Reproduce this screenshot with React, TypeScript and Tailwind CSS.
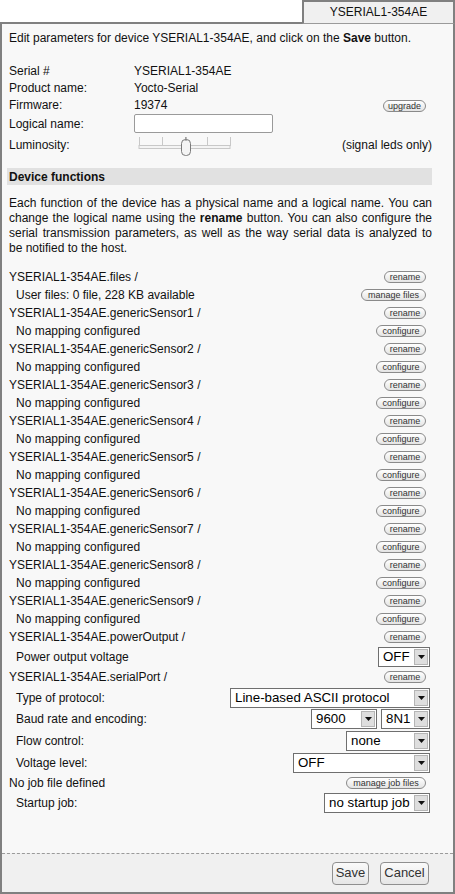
import React from "react";

function Pill({ label, w }: { label: string; w: string }) {
  return (
    <span
      className={`inline-flex h-[12px] items-center justify-center rounded-full border border-[#8a8a8a] bg-linear-to-b from-white to-[#e4e4e4] text-[9px] leading-none text-[#333] ${w}`}
    >
      {label}
    </span>
  );
}

function Select({ value, w }: { value: string; w: string }) {
  return (
    <div
      className={`flex h-[20px] items-center border border-[#6f6f6f] bg-white ${w}`}
    >
      <span className="flex-1 truncate pl-[4px] text-[13.3px] leading-none text-black">
        {value}
      </span>
      <span className="mr-[1px] flex h-[16px] w-[14px] items-center justify-center border border-[#b5b5b5] bg-[#dedede]">
        <svg width="7" height="4" viewBox="0 0 7 4">
          <path d="M0 0h7L3.5 4z" fill="#111" />
        </svg>
      </span>
    </div>
  );
}

function Row({
  children,
  right,
  sub,
  h = "h-[18px]",
  pr = "pr-[6px]",
}: {
  children: React.ReactNode;
  right?: React.ReactNode;
  sub?: boolean;
  h?: string;
  pr?: string;
}) {
  return (
    <div className={`flex items-center justify-between ${h} ${pr}`}>
      <span className={sub ? "pl-[7px]" : ""}>{children}</span>
      {right}
    </div>
  );
}

export default function App() {
  const sensors = [1, 2, 3, 4, 5, 6, 7, 8, 9];

  return (
    <div className="h-[894px] w-[455px] bg-white font-['Liberation_Sans',Arial,sans-serif] text-[12px] text-[#111]">
      {/* tab strip */}
      <div className="flex h-[24px]">
        <div className="flex-1 border-b-2 border-[#808080]" />
        <div className="flex w-[153px] items-center justify-center border-x-2 border-t-2 border-b border-[#808080] border-b-[#9a9a9a] border-b-dashed bg-[#f0f0f0] pb-[1px] text-[12px] text-[#111]">
          YSERIAL1-354AE
        </div>
      </div>

      <div className="flex h-[870px] flex-col border-x-2 border-b-2 border-[#808080] bg-[#f8f8f8]">
        <div className="flex-1 pl-[7px] pr-[21px]">
          <div className="mt-[7px] h-[15px] leading-[15px]">
            Edit parameters for device YSERIAL1-354AE, and click on the{" "}
            <b>Save</b> button.
          </div>

          {/* device info */}
          <div className="mt-[16px]">
            <div className="flex h-[17px] items-center">
              <span className="w-[125px]">Serial #</span>
              <span>YSERIAL1-354AE</span>
            </div>
            <div className="flex h-[17px] items-center">
              <span className="w-[125px]">Product name:</span>
              <span>Yocto-Serial</span>
            </div>
            <div className="flex h-[17px] items-center">
              <span className="w-[125px]">Firmware:</span>
              <span className="flex-1">19374</span>
              <span className="mr-[6px]">
                <Pill label="upgrade" w="w-[43px]" />
              </span>
            </div>
            <div className="flex h-[21px] items-center">
              <span className="w-[125px]">Logical name:</span>
              <div className="h-[19px] w-[139px] rounded-[2px] border border-[#9a9a9a] bg-white" />
            </div>
            <div className="flex h-[22px] items-center">
              <span className="w-[125px]">Luminosity:</span>
              <svg
                width="98"
                height="22"
                viewBox="0 0 98 22"
                className="ml-[3px] self-start"
              >
                <rect x="2" y="11.5" width="91" height="3" fill="#f4f4f4" stroke="#c8c8c8" />
                <path
                  d="M2.5 3v9M25.5 3v9M48.5 3v9M70.5 3v9M93.5 3v9"
                  stroke="#c8c8c8"
                />
                <rect x="44.5" y="5.5" width="9" height="16" rx="4" fill="#f4f4f4" stroke="#7a7a7a" />
                <path d="M49 3v4" stroke="#7a7a7a" />
              </svg>
              <span className="ml-auto">(signal leds only)</span>
            </div>
          </div>

          {/* device functions */}
          <div className="-ml-[2px] mt-[12px] flex h-[17px] items-center bg-[#e1e1e1] pl-[2px] font-bold">
            Device functions
          </div>

          <div className="mt-[11px] leading-[15px]">
            <div className="text-justify [text-align-last:justify]">
              Each function of the device has a physical name and a logical
              name. You can
            </div>
            <div className="text-justify [text-align-last:justify]">
              change the logical name using the <b>rename</b> button. You can
              also configure the
            </div>
            <div className="text-justify [text-align-last:justify]">
              serial transmission parameters, as well as the way serial data is
              analyzed to
            </div>
            <div>be notified to the host.</div>
          </div>

          {/* function list */}
          <div className="mt-[12px]">
            <Row right={<Pill label="rename" w="w-[42px]" />}>
              YSERIAL1-354AE.files /
            </Row>
            <Row sub right={<Pill label="manage files" w="w-[65px]" />}>
              User files: 0 file, 228 KB available
            </Row>
            {sensors.map((n) => (
              <React.Fragment key={n}>
                <Row right={<Pill label="rename" w="w-[42px]" />}>
                  YSERIAL1-354AE.genericSensor{n} /
                </Row>
                <Row sub right={<Pill label="configure" w="w-[50px]" />}>
                  No mapping configured
                </Row>
              </React.Fragment>
            ))}
            <Row right={<Pill label="rename" w="w-[42px]" />}>
              YSERIAL1-354AE.powerOutput /
            </Row>
            <Row
              sub
              h="h-[21px]"
              pr="pr-[2px]"
              right={<Select value="OFF" w="w-[52px]" />}
            >
              Power output voltage
            </Row>
            <Row h="h-[20px]" right={<Pill label="rename" w="w-[42px]" />}>
              YSERIAL1-354AE.serialPort /
            </Row>
            <Row
              sub
              h="h-[21px]"
              pr="pr-[2px]"
              right={<Select value="Line-based ASCII protocol" w="w-[200px]" />}
            >
              Type of protocol:
            </Row>
            <Row
              sub
              h="h-[22px]"
              pr="pr-[2px]"
              right={
                <div className="flex gap-[4px]">
                  <Select value="9600" w="w-[66px]" />
                  <Select value="8N1" w="w-[49px]" />
                </div>
              }
            >
              Baud rate and encoding:
            </Row>
            <Row
              sub
              h="h-[22px]"
              pr="pr-[2px]"
              right={<Select value="none" w="w-[84px]" />}
            >
              Flow control:
            </Row>
            <Row
              sub
              h="h-[22px]"
              pr="pr-[2px]"
              right={<Select value="OFF" w="w-[137px]" />}
            >
              Voltage level:
            </Row>
            <Row right={<Pill label="manage job files" w="w-[80px]" />}>
              No job file defined
            </Row>
            <Row
              sub
              h="h-[22px]"
              pr="pr-[2px]"
              right={<Select value="no startup job" w="w-[106px]" />}
            >
              Startup job:
            </Row>
          </div>
        </div>

        {/* footer */}
        <div className="flex h-[39px] items-center justify-end gap-[11px] border-t border-dashed border-[#9a9a9a] bg-[#f0f0f0] pr-[24px]">
          <button className="h-[23px] w-[37px] rounded-[4px] border border-[#8f8f8f] bg-linear-to-b from-[#fafafa] to-[#e6e6e6] text-[13px] text-[#333]">
            Save
          </button>
          <button className="h-[23px] w-[49px] rounded-[4px] border border-[#8f8f8f] bg-linear-to-b from-[#fafafa] to-[#e6e6e6] text-[13px] text-[#333]">
            Cancel
          </button>
        </div>
      </div>
    </div>
  );
}
